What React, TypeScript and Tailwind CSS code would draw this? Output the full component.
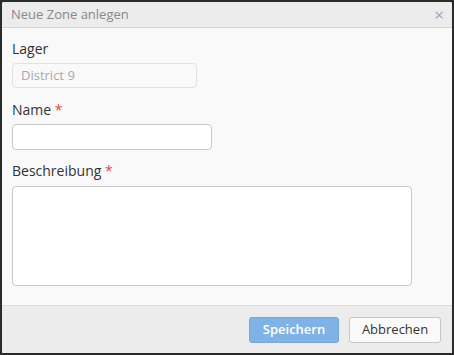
import React from "react";

export default function App() {
  return (
    <div className="w-[454px] h-[355px] bg-[#2b2b2b] pt-[2px] px-[2px] pb-[2px]" style={{ fontFamily: '"Open Sans", sans-serif' }}>
      <div className="flex flex-col h-full bg-[#f9f9f9] rounded-tl-[2px] rounded-tr-[2px] overflow-hidden">
        <div className="h-[26px] flex items-center justify-between pl-[9px] pr-[8px] bg-[#ececec] border-b border-[#d4d4d4]">
          <span className="text-[13px] text-[#888]">Neue Zone anlegen</span>
          <span className="text-[17px] text-[#9aa6b8] leading-none">×</span>
        </div>
        <div className="flex-1 px-[10px] pt-[11px]">
          <div className="text-[14px] text-[#333] leading-[20px]">Lager</div>
          <div className="mt-[4px] w-[185px] h-[25px] rounded-[4px] border border-[#e2e2e2] bg-[#f9f9f9] flex items-center px-[8px] text-[13px] text-[#aaa]">District 9</div>
          <div className="mt-[12px] text-[14px] text-[#333] leading-[20px]">Name <span className="text-[#e24b4b]">*</span></div>
          <div className="mt-[4px] w-[200px] h-[26px] rounded-[4px] border border-[#c8c8c8] bg-white" />
          <div className="mt-[11px] text-[14px] text-[#333] leading-[20px]">Beschreibung <span className="text-[#e24b4b]">*</span></div>
          <div className="mt-[5px] w-[400px] h-[100px] rounded-[4px] border border-[#c8c8c8] bg-white" />
        </div>
        <div className="h-[48px] bg-[#ececec] border-t border-[#dcdcdc] flex items-center justify-end gap-[10px] pr-[11px]">
          <button className="w-[90px] h-[26px] rounded-[3px] bg-[#7fb2e5] border border-[#74a8dc] text-white text-[13px] font-semibold">Speichern</button>
          <button className="w-[92px] h-[26px] rounded-[3px] bg-[#fafafa] border border-[#c8c8c8] text-[#333] text-[13px]">Abbrechen</button>
        </div>
      </div>
    </div>
  );
}
